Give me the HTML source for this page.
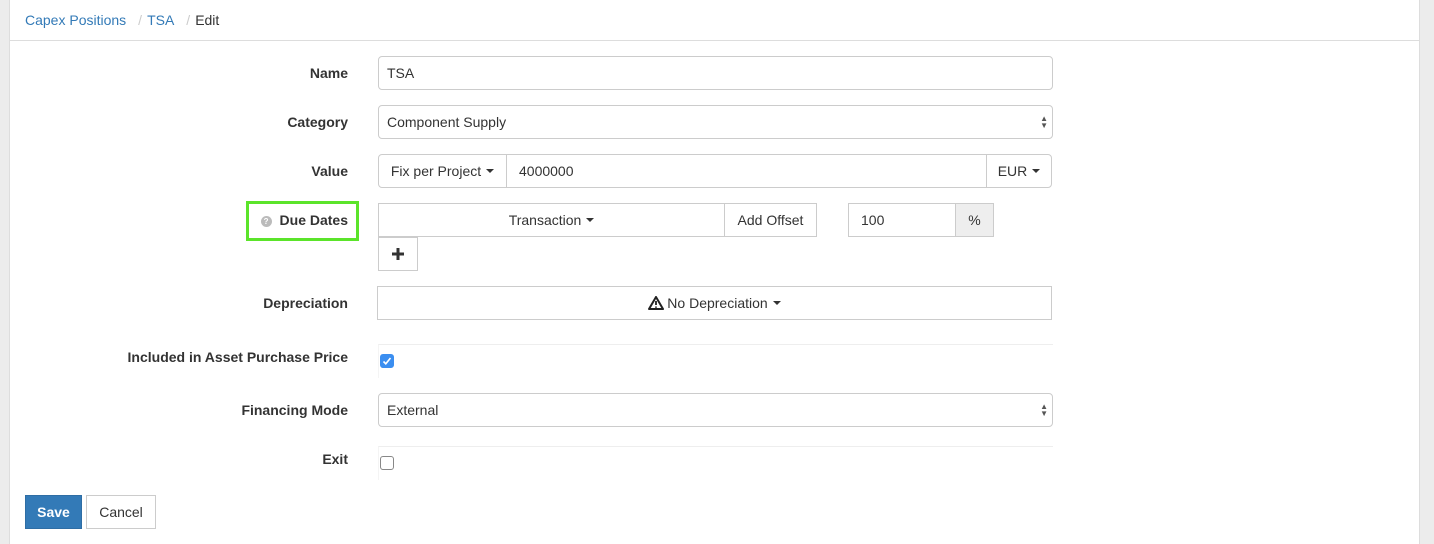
<!DOCTYPE html>
<html><head><meta charset="utf-8"><style>
*{box-sizing:border-box;margin:0;padding:0}
body{width:1434px;height:544px;background:#ececec;font-family:"Liberation Sans",sans-serif;font-size:14px;color:#333;position:relative;overflow:hidden}
.panel{position:absolute;left:9px;top:0;width:1411px;height:544px;background:#fff;border-left:1px solid #ddd;border-right:1px solid #ddd}
.a{position:absolute}
.hr{left:10px;top:40px;width:1410px;height:1px;background:#ddd}
.lbl{font-weight:bold;text-align:right;right:1086px;font-size:14px}
.box{border:1px solid #ccc;background:#fff;display:flex;align-items:center;padding:0 8px}
.rnd{border-radius:4px}
.c{justify-content:center}
.caret{display:inline-block;width:0;height:0;border-left:4px solid transparent;border-right:4px solid transparent;border-top:4px solid #333;margin-left:5px;vertical-align:middle}
.arr{position:absolute;right:4px;top:9px;font-size:8px;line-height:7px;color:#555}
.faint{border-top:1px solid #eee;border-left:1px solid #f4f4f4}
</style></head><body>
<div class="panel"></div>
<div class="a" style="left:25px;top:12px;color:#337ab7">Capex Positions<span style="color:#ccc;margin:0 5px 0 12px">/</span>TSA<span style="color:#ccc;margin:0 5px 0 12px">/</span><span style="color:#333">Edit</span></div>
<div class="a hr"></div>

<div class="a lbl" style="top:65px">Name</div>
<div class="a box rnd" style="left:378px;top:56px;width:675px;height:34px">TSA</div>

<div class="a lbl" style="top:114px">Category</div>
<div class="a box rnd" style="left:378px;top:105px;width:675px;height:34px">Component Supply<div class="arr">▲<br>▼</div></div>

<div class="a lbl" style="top:163px">Value</div>
<div class="a box c" style="left:378px;top:154px;width:129px;height:34px;border-radius:4px 0 0 4px">Fix per Project<span class="caret"></span></div>
<div class="a box" style="left:506px;top:154px;width:481px;height:34px;padding-left:12px">4000000</div>
<div class="a box c" style="left:986px;top:154px;width:66px;height:34px;border-radius:0 4px 4px 0">EUR<span class="caret"></span></div>

<div class="a" style="left:246px;top:201px;width:113px;height:40px;border:3px solid #5be42a"></div>
<div class="a lbl" style="top:212px"><span style="display:inline-block;width:11px;height:11px;border-radius:50%;background:#bbb;color:#fff;font-size:8px;line-height:11px;text-align:center;margin-right:8px;vertical-align:1px">?</span>Due Dates</div>
<div class="a box c" style="left:378px;top:203px;width:347px;height:34px">Transaction<span class="caret"></span></div>
<div class="a box c" style="left:724px;top:203px;width:93px;height:34px">Add Offset</div>
<div class="a box" style="left:848px;top:203px;width:108px;height:34px;padding-left:12px">100</div>
<div class="a box c" style="left:955px;top:203px;width:39px;height:34px;background:#eee">%</div>
<div class="a box c" style="left:378px;top:237px;width:40px;height:34px"><svg width="12" height="12" viewBox="0 0 12 12"><path d="M6 0v12M0 6h12" stroke="#333" stroke-width="3"/></svg></div>

<div class="a lbl" style="top:295px">Depreciation</div>
<div class="a box c" style="left:377px;top:286px;width:675px;height:34px"><svg width="16" height="14" viewBox="0 0 16 14" style="margin-right:3px"><path d="M8 1L15 13H1Z" fill="none" stroke="#222" stroke-width="2" stroke-linejoin="round"/><path d="M8 5v4M8 10.5v1.2" stroke="#222" stroke-width="1.8"/></svg>No Depreciation<span class="caret"></span></div>

<div class="a lbl" style="top:349px">Included in Asset Purchase Price</div>
<div class="a faint" style="left:378px;top:344px;width:675px;height:34px"></div>
<div class="a" style="left:380px;top:354px;width:14px;height:14px;border-radius:3px;background:#3b8ef0"><svg width="14" height="14" viewBox="0 0 14 14"><path d="M3.5 7.5l2.3 2.3L10.5 4" fill="none" stroke="#fff" stroke-width="1.6"/></svg></div>

<div class="a lbl" style="top:402px">Financing Mode</div>
<div class="a box rnd" style="left:378px;top:393px;width:675px;height:34px">External<div class="arr">▲<br>▼</div></div>

<div class="a lbl" style="top:451px">Exit</div>
<div class="a faint" style="left:378px;top:446px;width:675px;height:34px"></div>
<div class="a" style="left:380px;top:456px;width:14px;height:14px;border-radius:3px;border:1px solid #888;background:#fff"></div>

<div class="a box c" style="left:25px;top:495px;width:57px;height:34px;background:#337ab7;border-color:#2e6da4;color:#fff;font-weight:bold">Save</div>
<div class="a box c" style="left:86px;top:495px;width:70px;height:34px">Cancel</div>
</body></html>
